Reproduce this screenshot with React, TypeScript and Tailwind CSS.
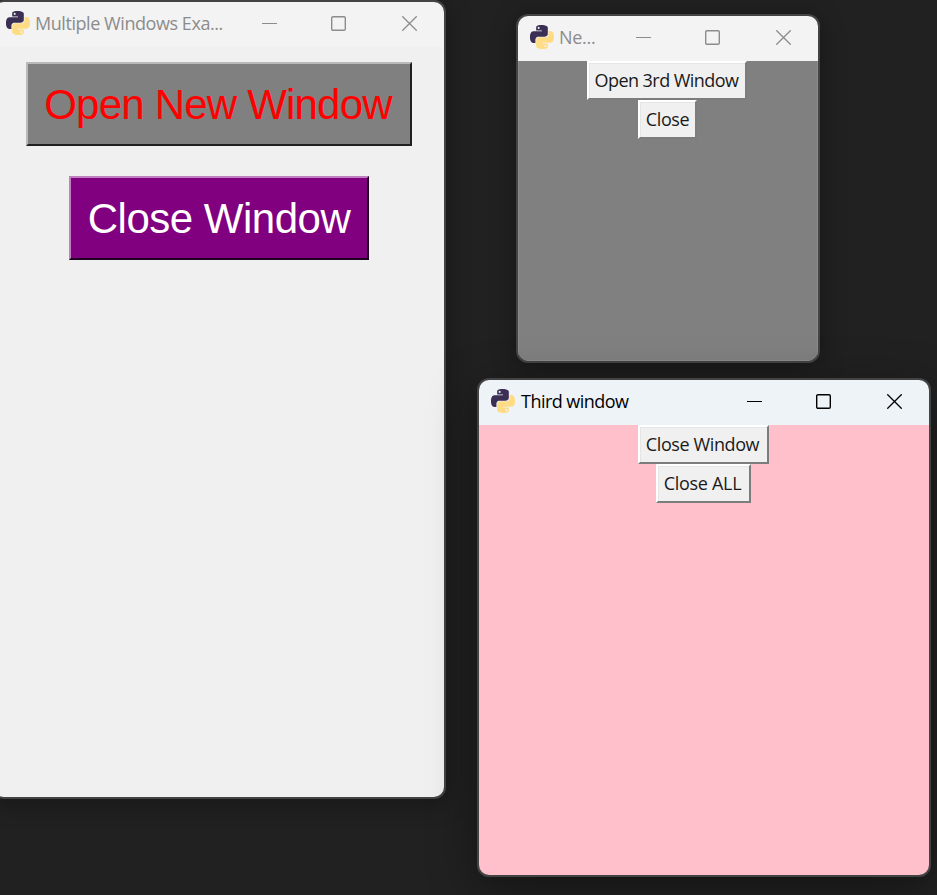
import type { ReactNode } from "react";
import clsx from "clsx";

function PythonLogo() {
  return (
    <svg viewBox="0 0 24 24" className="size-6 shrink-0">
      <path
        fill="#3b3054"
        d="M14.25.18l.9.2.73.26.59.3.45.32.34.34.25.34.16.33.1.3.04.26.02.2-.01.13V8.5l-.05.63-.13.55-.21.46-.26.38-.3.31-.33.25-.35.19-.35.14-.33.1-.3.07-.26.04-.21.02H8.77l-.69.05-.59.14-.5.22-.41.27-.33.32-.27.35-.2.36-.15.37-.1.35-.07.32-.04.27-.02.21v3.06H3.17l-.21-.03-.28-.07-.32-.12-.35-.18-.36-.26-.36-.36-.35-.46-.32-.59-.28-.73-.21-.88-.14-1.05-.05-1.23.06-1.22.16-1.04.24-.87.32-.71.36-.57.4-.44.42-.33.42-.24.4-.16.36-.1.32-.05.24-.01h.16l.06.01h8.16v-.83H6.18l-.01-2.75-.02-.37.05-.34.11-.31.17-.28.25-.26.31-.23.38-.2.44-.18.51-.15.58-.12.64-.1.71-.06.77-.04.84-.02 1.27.05zm-6.3 1.98l-.23.33-.08.41.08.41.23.34.33.22.41.09.41-.09.33-.22.23-.34.08-.41-.08-.41-.23-.33-.33-.22-.41-.09-.41.09z"
      />
      <path
        fill="#ffdc84"
        d="M21.04 6.11l.28.06.32.12.35.18.36.27.36.35.35.47.32.59.28.73.21.88.14 1.04.05 1.23-.06 1.23-.16 1.04-.24.86-.32.71-.36.57-.4.45-.42.33-.42.24-.4.16-.36.09-.32.05-.24.02-.16-.01h-8.22v.82h5.84l.01 2.76.02.36-.05.34-.11.31-.17.29-.25.25-.31.24-.38.2-.44.17-.51.15-.58.13-.64.09-.71.07-.77.04-.84.01-1.27-.04-1.07-.14-.9-.2-.73-.25-.59-.3-.45-.33-.34-.34-.25-.34-.16-.33-.1-.3-.04-.25-.02-.2.01-.13v-5.34l.05-.64.13-.54.21-.46.26-.38.3-.32.33-.24.35-.2.35-.14.33-.1.3-.06.26-.04.21-.02.13-.01h5.84l.69-.05.59-.14.5-.21.41-.28.33-.32.27-.35.2-.36.15-.36.1-.35.07-.32.04-.28.02-.21V6.07h2.09l.14.01zm-6.47 14.25l-.23.33-.08.41.08.41.23.33.33.23.41.08.41-.08.33-.23.23-.33.08-.41-.08-.41-.23-.33-.33-.23-.41-.08-.41.08z"
      />
    </svg>
  );
}

function WindowControls({ active }: { active?: boolean }) {
  const stroke = active ? "#000000" : "#8c8c8c";
  return (
    <div className="ml-auto flex h-full shrink-0">
      <button className="flex w-[65px] items-center justify-center" aria-label="Minimize">
        <svg width="15" height="15" className="-mt-0.5" stroke={stroke} fill="none">
          <path d="M0 7.5h15" />
        </svg>
      </button>
      <button className="flex w-[73px] items-center justify-center" aria-label="Maximize">
        <svg width="15" height="15" className="-mt-0.5" stroke={stroke} fill="none">
          <rect x="0.7" y="0.7" width="13.6" height="13.6" rx="1.3" strokeWidth="1.4" />
        </svg>
      </button>
      <button className="flex w-[69px] items-center justify-center" aria-label="Close">
        <svg width="15" height="15" className="-mt-0.5" stroke={stroke} fill="none">
          <path d="M0.3 0.3l14.4 14.4M14.7 0.3L0.3 14.7" strokeWidth="1.3" />
        </svg>
      </button>
    </div>
  );
}

type WindowProps = {
  title: string;
  titleClass: string;
  frameClass: string;
  bodyClass: string;
  active?: boolean;
  children: ReactNode;
};

function AppWindow({ title, titleClass, frameClass, bodyClass, active, children }: WindowProps) {
  return (
    <section
      className={clsx(
        "absolute flex flex-col overflow-hidden rounded-[12px] border-2 border-[#434343]",
        frameClass,
      )}
    >
      <header
        className={clsx(
          "flex h-[45px] shrink-0 items-center pl-3",
          active ? "bg-[#eef3f8] text-black" : "bg-[#f3f3f3] text-[#8c8c8c]",
        )}
      >
        <div className="-mt-1">
          <PythonLogo />
        </div>
        <h1 className={clsx("-mt-1 text-[18px] leading-6 whitespace-nowrap", titleClass)}>{title}</h1>
        <WindowControls active={active} />
      </header>
      <div className={clsx("flex flex-1 flex-col items-center", bodyClass)}>{children}</div>
    </section>
  );
}

function SmallButton({ className, children }: { className: string; children: ReactNode }) {
  return (
    <button
      className={clsx(
        "flex h-[39px] items-center justify-center border-2 border-t-white border-r-[#7c7c7c] border-b-[#7c7c7c] border-l-white bg-[#f0f0f0] text-[18px] whitespace-nowrap text-[#1a1a1a] shadow-[inset_1px_1px_0_#e5e5e5]",
        className,
      )}
    >
      {children}
    </button>
  );
}

export default function App() {
  return (
    <main className="relative h-[895px] w-[937px] overflow-hidden bg-[#212121] font-['Open_Sans','Noto_Sans',sans-serif]">
      <AppWindow
        title="Multiple Windows Exa..."
        titleClass="ml-[5px] tracking-[-0.44px]"
        frameClass="-left-2 top-0 h-[799px] w-[454px] shadow-[0_4px_24px_rgba(0,0,0,0.35)]"
        bodyClass="gap-[30px] bg-[#f0f0f0] pt-[15px] font-['Liberation_Sans',Arial,sans-serif] text-[42px]"
      >
        <button className="mr-px flex h-[84px] w-[386px] items-center justify-center border-2 border-t-[#b9b9b9] border-r-[#202020] border-b-[#202020] border-l-[#b9b9b9] bg-[#808080] pr-px tracking-[-0.8px] whitespace-nowrap text-[#ff0000]">
          Open New Window
        </button>
        <button className="flex h-[84px] w-[300px] items-center justify-center border-2 border-t-[#c080c0] border-r-[#200020] border-b-[#200020] border-l-[#c080c0] bg-[#800080] tracking-[-0.5px] whitespace-nowrap text-white">
          Close Window
        </button>
      </AppWindow>

      <AppWindow
        title="Ne..."
        titleClass="ml-[5px] tracking-[-0.3px]"
        frameClass="left-[516px] top-[14px] h-[349px] w-[304px] shadow-[0_4px_24px_rgba(0,0,0,0.35)]"
        bodyClass="border-x border-b border-[#8c8c8c] bg-[#808080]"
      >
        <SmallButton className="mr-0.5 w-[160px] pr-px tracking-[-0.55px]">Open 3rd Window</SmallButton>
        <SmallButton className="mr-px w-[59px] tracking-[-0.4px]">Close</SmallButton>
      </AppWindow>

      <AppWindow
        title="Third window"
        titleClass="ml-1.5 tracking-[-0.53px]"
        frameClass="left-[477px] top-[378px] h-[499px] w-[454px] shadow-[0_12px_48px_rgba(0,0,0,0.4)]"
        bodyClass="bg-[#ffc0cb]"
        active
      >
        <SmallButton className="mr-px w-[131px] pr-0.5 tracking-[-0.4px]">Close Window</SmallButton>
        <SmallButton className="mr-px w-[95px] pr-0.5 tracking-[-0.3px]">Close ALL</SmallButton>
      </AppWindow>
    </main>
  );
}
